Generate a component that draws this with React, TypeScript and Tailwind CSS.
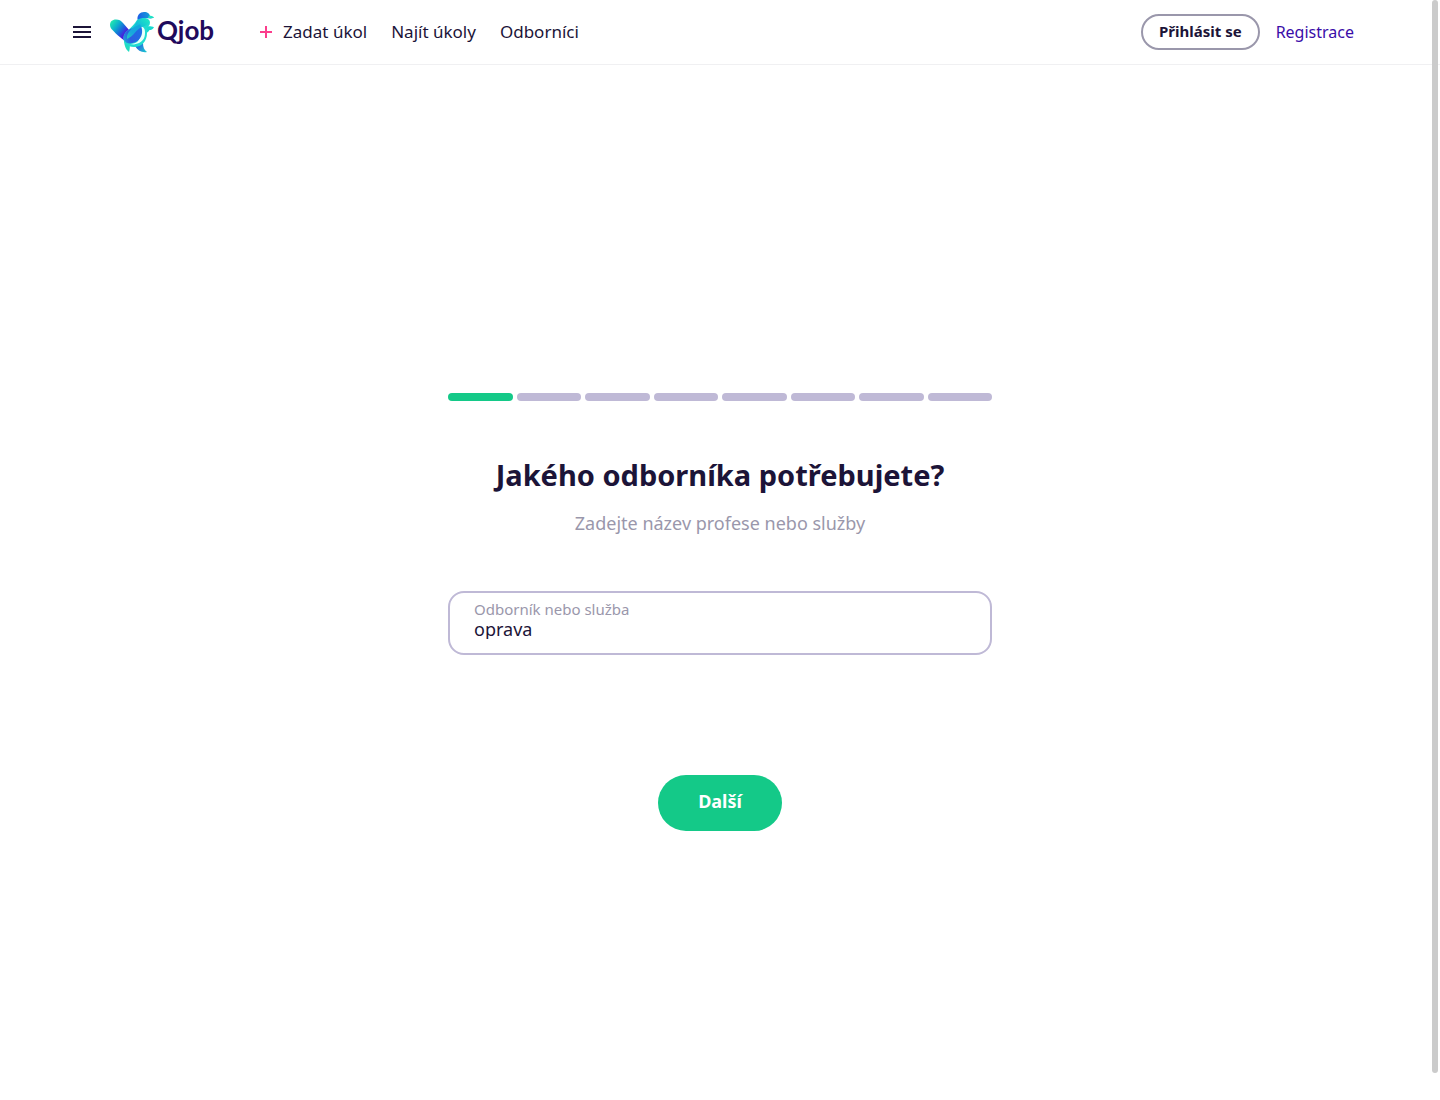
import { useState } from "react";

const NAV_LINKS = [
    { label: 'Zadat úkol', href: '#zadat', plus: true },
    { label: 'Najít úkoly', href: '#ukoly', plus: false },
    { label: 'Odborníci', href: '#odbornici', plus: false },
];

const TOTAL_STEPS = 8;

function BirdLogo() {
    return (
        <svg viewBox="0 0 46 42" className="w-[46px] h-[42px]" aria-hidden="true">
            <defs>
                <linearGradient id="wing" x1="2" y1="12" x2="19" y2="25" gradientUnits="userSpaceOnUse">
                    <stop offset="0" stopColor="#20e3b2" />
                    <stop offset="0.3" stopColor="#0cb0cc" />
                    <stop offset="0.6" stopColor="#1b62dc" />
                    <stop offset="0.85" stopColor="#5210dc" />
                    <stop offset="1" stopColor="#4a1be0" />
                </linearGradient>
                <linearGradient id="head" x1="29" y1="6" x2="42" y2="3" gradientUnits="userSpaceOnUse">
                    <stop offset="0" stopColor="#1c5fe6" />
                    <stop offset="1" stopColor="#12a4d6" />
                </linearGradient>
                <linearGradient id="neck" x1="38" y1="8" x2="19" y2="27" gradientUnits="userSpaceOnUse">
                    <stop offset="0" stopColor="#1be8c2" />
                    <stop offset="0.4" stopColor="#0fb4dc" />
                    <stop offset="0.75" stopColor="#14b8dc" />
                    <stop offset="1" stopColor="#1fd9c0" />
                </linearGradient>
                <linearGradient id="body" x1="14" y1="30" x2="34" y2="22" gradientUnits="userSpaceOnUse">
                    <stop offset="0" stopColor="#1fa4dc" />
                    <stop offset="0.35" stopColor="#2c5fe0" />
                    <stop offset="1" stopColor="#1c6fe6" />
                </linearGradient>
                <linearGradient id="foot" x1="28" y1="34" x2="37" y2="41" gradientUnits="userSpaceOnUse">
                    <stop offset="0" stopColor="#2a5fe0" />
                    <stop offset="1" stopColor="#1bc8d0" />
                </linearGradient>
            </defs>
            <path d="M15 28c0 5 1 10 5 13 1-3 1-6 .5-9z" fill="#22dcc0" />
            <path d="M26 35l8-3c0 4 1 7 4 9-5 .8-9-1-12-6z" fill="url(#foot)" />
            <path d="M2.500 18C-.5 14 1 8.500 7 8.500c3 0 5 1 7 3.500l6.500 7.500-2 12c-4-2-11-8-16-13.500z" fill="url(#wing)" />
            <path d="M35 15.500c4-.5 8-.5 10 .7-1 2-3 2.800-4.500 2.800-1 2-2.500 3-4.500 3z" fill="#17d9cf" />
            <path d="M28 9c2-2 5-2.500 8-2 4 .5 6 3 4.500 7-2 1.500-2.500 4-2.500 8 0 8-5 14-13 14-7 0-11-4-10.500-10C15 20 23 18 28 9z" fill="#1fdcd0" />
            <path d="M31 16c3-1 5 1 5 5 .3 7-3 11-11 12.500l-4-.5c7 0 10-4 10-9z" fill="#e9fffb" />
            <path d="M15 24c3-6 10-7 16-11 3 5 3 11-1 15.500C27 32 18 35 15 29c-.6-2-.5-3.500 0-5z" fill="url(#body)" />
            <path d="M18 28c-1-8 7-10 10.500-19 4-2.500 9.500-1.500 11.500 1-1 5-6 5-9 7-6 4-6 8-13 11z" fill="url(#neck)" opacity="0.8" />
            <path d="M28.500 8.500C28 4 31 1 35 1c4 0 5.500 2 6 4l4 1.500c-2 1.200-4 1-6 .8-4-.8-7-.5-10.500 1.200z" fill="url(#head)" />
            <path d="M40 4.500c2 0 4 .7 5.200 2-2 .8-4 .8-6.200.5z" fill="#1fe3c4" />
        </svg>
    );
}

export default function App() {
    const [step, setStep] = useState(1);
    const [service, setService] = useState('oprava');

    return (
        <div className="relative min-h-screen flex flex-col bg-white text-[#1c1438] font-['Noto_Sans',sans-serif]">
            <header className="flex items-center justify-between h-[65px] pl-[70px] pr-[86px] border-b border-[#f0f0f2]">
                <div className="flex items-center">
                    <button aria-label="Menu" className="w-6 h-6 flex items-center justify-center cursor-pointer">
                        <svg viewBox="0 0 18 12" className="w-[18px] h-3" fill="currentColor" aria-hidden="true">
                            <path d="M0 0h18v2H0zM0 5h18v2H0zM0 10h18v2H0z" />
                        </svg>
                    </button>
                    <a href="#domu" className="flex items-center ml-[15px]">
                        <BirdLogo />
                        <span className="ml-0.5 pb-1 text-[26px] leading-8 font-bold text-[#1f0a5c] font-['Lato',sans-serif]">Qjob</span>
                    </a>
                    <nav className="flex items-center gap-6 ml-[46px]">
                        {NAV_LINKS.map(l => (
                            <a key={l.label} href={l.href} className="flex items-center text-[17px] leading-6">
                                {l.plus && (
                                    <svg viewBox="0 0 12 12" className="w-3 h-3 mr-[11px]" fill="#fb3d8c" aria-hidden="true">
                                        <path d="M5 0h2v5h5v2H7v5H5V7H0V5h5z" />
                                    </svg>
                                )}
                                {l.label}
                            </a>
                        ))}
                    </nav>
                </div>
                <div className="flex items-center gap-4">
                    <button className="h-9 px-4 pb-0.5 rounded-full border-2 border-[#9a97ab] text-[15px] leading-5 font-bold cursor-pointer">Přihlásit se</button>
                    <a href="#registrace" className="text-base leading-6 text-[#3a0ca8]">Registrace</a>
                </div>
            </header>

            <main className="flex-1 flex flex-col justify-center px-4 pt-[58px]">
                <form className="w-full max-w-[544px] mx-auto flex flex-col items-center" onSubmit={e => e.preventDefault()}>
                    {/* Progress */}
                    <div className="w-full flex gap-1">
                        {Array.from({ length: TOTAL_STEPS }, (_, i) => (
                            <div key={i} className={`flex-1 h-2 rounded-full ${i < step ? 'bg-[#14c988]' : 'bg-[#bfb9d6]'}`} />
                        ))}
                    </div>

                    <h1 className="mt-[54px] text-[29px] leading-10 font-bold text-center">Jakého odborníka potřebujete?</h1>
                    <p className="mt-4 text-lg leading-6 text-[#9a97ab] text-center">Zadejte název profese nebo služby</p>

                    <div className="w-full h-16 mt-14 px-6 pt-1.5 rounded-2xl border-2 border-[#bfb9d6]">
                        <label htmlFor="service" className="block text-[15px] leading-5 text-[#9a97ab]">Odborník nebo služba</label>
                        <input
                            id="service"
                            value={service}
                            onChange={e => setService(e.target.value)}
                            className="block w-full h-5 text-lg leading-5 outline-none"
                        />
                    </div>

                    <button
                        type="submit"
                        onClick={() => setStep(s => Math.min(s + 1, TOTAL_STEPS))}
                        className="h-14 mt-[120px] px-10 pb-1 rounded-full bg-[#14c988] text-lg font-bold text-white cursor-pointer"
                    >
                        Další
                    </button>
                </form>
            </main>

            {/* Scroll thumb */}
            <div className="fixed top-0 right-0.5 w-1.5 h-[97.5vh] rounded-full bg-[#cbcbcb]" />
        </div>
    );
}
